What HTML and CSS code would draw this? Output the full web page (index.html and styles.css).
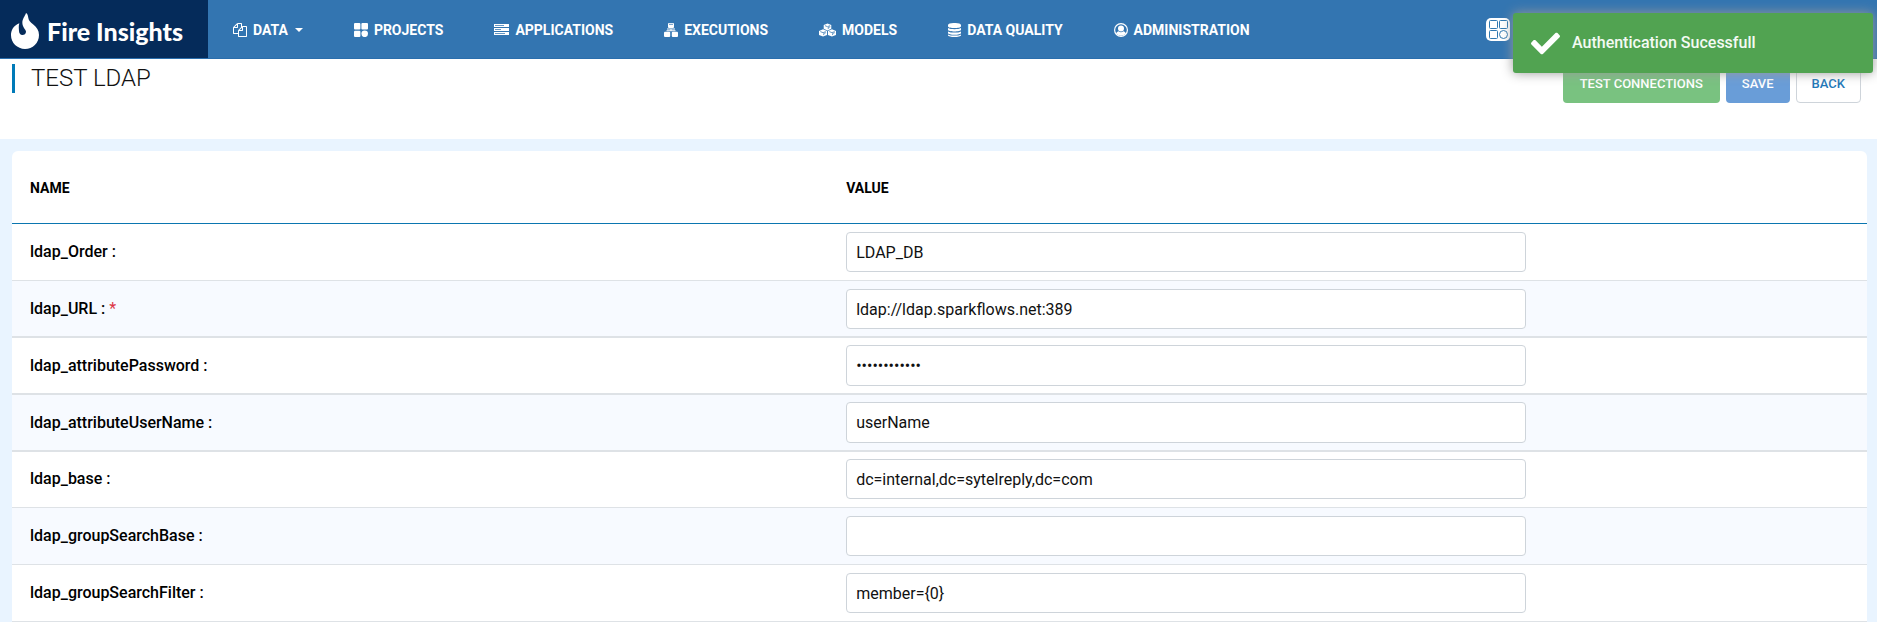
FILE: index.html
```html
<!DOCTYPE html>
<html lang="en">
<head>
<meta charset="utf-8">
<title>Fire Insights - Test LDAP</title>
<link rel="stylesheet" href="styles.css">
</head>
<body>
<header class="topbar">
  <a class="brand" href="#">
    <svg class="brand-logo" viewBox="0 0 84 108" aria-hidden="true"><path fill="#fff" d="M45 0C50 2 51 9 52 15C53 22 58 28 66 34C77 42 84 53 84 66C84 90 65 108 42 108C19 108 0 90 0 67C0 53 7 38 25 31C22 41 24 47 24 54C24 61 28 66 34 66C40 66 45 62 45 56C45 50 34 42 34 29C34 17 42 10 45 0Z"/></svg>
    <span>Fire Insights</span>
  </a>
  <nav class="menu">
    <a class="menu-item" href="#">
      <svg class="icon" viewBox="0 0 1792 1792" aria-hidden="true"><path d="M1696 384q40 0 68 28t28 68v1216q0 40-28 68t-68 28h-960q-40 0-68-28t-28-68v-288h-544q-40 0-68-28t-28-68v-672q0-40 20-88t48-76l408-408q28-28 76-48t88-20h416q40 0 68 28t28 68v328q68-40 128-40h416zm-544 213l-299 299h299v-299zm-640-384l-299 299h299v-299zm196 647l316-316v-416h-384v416q0 40-28 68t-68 28h-416v640h512v-256q0-40 20-88t48-76zm956 804v-1152h-384v416q0 40-28 68t-68 28h-416v640h896z"/></svg>
      <span>DATA</span><span class="caret"></span>
    </a>
    <a class="menu-item" href="#">
      <svg class="icon" viewBox="0 0 14 14" aria-hidden="true"><rect width="6.4" height="6.6" rx="1"/><rect x="7.4" width="6.6" height="6.6" rx="1"/><rect y="7.8" width="6.4" height="6.2" rx="1"/><circle cx="10.7" cy="10.8" r="3.3"/></svg>
      <span>PROJECTS</span>
    </a>
    <a class="menu-item" href="#">
      <svg class="icon icon-wide" viewBox="0 0 15 14" aria-hidden="true"><path fill-rule="evenodd" d="M0 1h15v3H0zM1 2.200v.8h9v-.8zM0 5h15v3H0zM1 6.200v.8h6v-.8zM0 9h15v3H0zM1 10.200v.8h10v-.8z"/></svg>
      <span>APPLICATIONS</span>
    </a>
    <a class="menu-item" href="#">
      <svg class="icon" viewBox="0 0 14 14" aria-hidden="true"><rect x="4" width="6" height="5" rx="1"/><path d="M3 5.600h8v1H3zM6.500 6h1v2h-1zM2.500 7.300h9v.9h-9z"/><rect y="8.800" width="6.200" height="5.200" rx="1"/><rect x="7.800" y="8.800" width="6.200" height="5.200" rx="1"/><path class="line" d="M5 1.300h4"/></svg>
      <span>EXECUTIONS</span>
    </a>
    <a class="menu-item" href="#">
      <svg class="icon icon-cubes" viewBox="0 0 18 14" aria-hidden="true"><path d="M9 0l4 1.600v4.200L9 7.600 5 5.800V1.600zM4.300 6.200l4.200 1.800v4.200L4.300 14 0 12.200V8zM13.700 6.200L18 8v4.200L13.700 14l-4.200-1.800V8z"/><path class="line" d="M6.300 2.400L9 3.500l2.700-1.100M9.800 5.900V4.400l2.200-.9M1.400 8.700l2.900 1.100 2.800-1.100M5 12.400v-1.700l2.300-.9M10.900 8.700l2.800 1.100 2.900-1.100M14.400 12.400v-1.700l2.300-.9"/></svg>
      <span>MODELS</span>
    </a>
    <a class="menu-item" href="#">
      <svg class="icon icon-narrow" viewBox="0 0 13 14" aria-hidden="true"><path d="M0 2c0-2.700 13-2.700 13 0v1.200c0 2.500-13 2.500-13 0zM0 5c2.600 1.600 10.400 1.600 13 0v1.700c0 2.300-13 2.300-13 0zM0 8.400c2.600 1.600 10.400 1.600 13 0v1.500c0 2.400-13 2.400-13 0zM0 11.400c2.600 1.600 10.400 1.600 13 0v.8c0 2.400-13 2.400-13 0z"/></svg>
      <span>DATA QUALITY</span>
    </a>
    <a class="menu-item" href="#">
      <svg class="icon" viewBox="0 0 14 14" aria-hidden="true"><circle cx="7" cy="7" r="7"/><circle cx="7" cy="7" r="5.800" fill="#3375b1"/><circle cx="7" cy="5.600" r="3"/><path d="M2 10.600C2.600 9 3.800 8.400 4.600 8.200C6 9.600 8 9.600 9.400 8.200C10.400 8.400 11.400 9 12 10.600A7 7 0 0 1 2 10.600z"/></svg>
      <span>ADMINISTRATION</span>
    </a>
  </nav>
  <button class="apps" type="button" aria-label="Apps">
    <svg viewBox="0 0 24 24" aria-hidden="true"><rect width="24" height="23" rx="5" fill="#fff"/><g fill="none" stroke="#2f78b0"><rect x="3.500" y="2.500" width="8" height="8" rx="1"/><rect x="13.500" y="2.500" width="8" height="8" rx="1"/><rect x="3.500" y="12.500" width="8" height="8" rx="1"/><circle cx="17.500" cy="16.500" r="4"/></g></svg>
  </button>
</header>

<section class="page-head">
  <h1 class="page-title">TEST LDAP</h1>
  <div class="actions">
    <button class="btn btn-test" type="button">TEST CONNECTIONS</button>
    <button class="btn btn-save" type="button">SAVE</button>
    <button class="btn btn-back" type="button">BACK</button>
  </div>
</section>

<main class="content">
  <table class="settings">
    <thead>
      <tr><th class="col-name" scope="col">NAME</th><th scope="col">VALUE</th></tr>
    </thead>
    <tbody>
      <tr><td><label for="order">ldap_Order :</label></td><td><input class="field" id="order" type="text" value="LDAP_DB"></td></tr>
      <tr class="thick"><td><label for="url">ldap_URL : <span class="required">*</span></label></td><td><input class="field" id="url" type="text" value="ldap://ldap.sparkflows.net:389"></td></tr>
      <tr class="thick"><td><label for="pass">ldap_attributePassword :</label></td><td><input class="field" id="pass" type="password" value="abcdefghijkl"></td></tr>
      <tr class="thick"><td><label for="user">ldap_attributeUserName :</label></td><td><input class="field" id="user" type="text" value="userName"></td></tr>
      <tr class="tight"><td><label for="base">ldap_base :</label></td><td><input class="field" id="base" type="text" value="dc=internal,dc=sytelreply,dc=com"></td></tr>
      <tr><td><label for="gbase">ldap_groupSearchBase :</label></td><td><input class="field" id="gbase" type="text" value=""></td></tr>
      <tr><td><label for="gfilter">ldap_groupSearchFilter :</label></td><td><input class="field" id="gfilter" type="text" value="member={0}"></td></tr>
    </tbody>
  </table>
</main>

<div class="toast" role="status">
  <svg class="toast-icon" viewBox="0 0 512 512" aria-hidden="true"><path fill="#fff" d="M173.898 439.404l-166.400-166.400c-9.997-9.997-9.997-26.206 0-36.204l36.203-36.204c9.997-9.998 26.207-9.998 36.204 0L192 312.690 432.095 72.596c9.997-9.997 26.207-9.997 36.204 0l36.203 36.204c9.997 9.997 9.997 26.206 0 36.204l-294.400 294.401c-9.998 9.997-26.207 9.997-36.204-.001z"/></svg>
  <span>Authentication Sucessfull</span>
</div>
</body>
</html>
```

FILE: styles.css
```css
* { box-sizing: border-box; }

body {
  margin: 0;
  background: #e9f4ff;
  color: #000;
  font-family: Roboto, "Liberation Sans", sans-serif;
  font-size: 16px;
}

.topbar {
  display: flex;
  align-items: stretch;
  height: 59px;
  background: #3375b1;
  border-bottom: 1px solid #2a6ead;
}

.brand {
  display: flex;
  align-items: center;
  gap: 8px;
  width: 208px;
  padding: 4px 0 0 11px;
  background: #052b5a;
  color: #fff;
  font: 900 25px/32px Lato, sans-serif;
  text-decoration: none;
  white-space: nowrap;
}

.brand-logo { width: 28px; height: 36px; }

.menu {
  display: flex;
  align-items: center;
  gap: 51px;
  padding: 2px 0 0 25px;
}

.menu-item {
  display: flex;
  align-items: center;
  gap: 6px;
  color: #fff;
  font-size: 14px;
  font-weight: 700;
  line-height: 20px;
  text-decoration: none;
  white-space: nowrap;
}

.icon { width: 14px; height: 14px; fill: #fff; }
.icon-wide { width: 15px; }
.icon-cubes { width: 17px; }
.icon-narrow { width: 13px; }
.icon .line { fill: none; stroke: #3375b1; stroke-width: 0.8; }

.caret {
  margin-left: 1px;
  border: 4px solid transparent;
  border-top-color: #fff;
  border-bottom: 0;
}

.apps {
  margin: 2px 367px 0 auto;
  align-self: center;
  padding: 0;
  border: 0;
  background: none;
  cursor: pointer;
}

.apps svg { display: block; width: 24px; height: 24px; }

.page-head {
  display: flex;
  align-items: flex-start;
  justify-content: space-between;
  min-height: 80px;
  padding: 5px 16px 0 12px;
  background: #fff;
}

.page-title {
  margin: 0;
  padding-left: 16px;
  border-left: 3px solid #007ab8;
  color: #111;
  font-size: 24px;
  font-weight: 300;
  line-height: 29px;
}

.actions { display: flex; gap: 6px; }

.btn {
  height: 39px;
  padding: 0 16px;
  border: 0;
  border-radius: 4px;
  color: #fff;
  font: 500 13px/20px Roboto, sans-serif;
  cursor: pointer;
}

.btn-test { padding: 0 17px; background: #79c280; }
.btn-save { background: #699dd8; }
.btn-back { padding: 0 15px; background: #fff; border: 1px solid #ced4da; color: #1f78b8; }

.content { padding: 12px 10px 0 12px; }

.settings {
  width: 100%;
  table-layout: fixed;
  border-collapse: separate;
  border-spacing: 0;
  background: #fff;
  border-radius: 6px 6px 0 0;
}

.col-name { width: 44%; }

.settings th {
  height: 73px;
  padding: 2px 0 0 18px;
  border-bottom: 1px solid #0b76b0;
  font-size: 14px;
  font-weight: 700;
  line-height: 20px;
  text-align: left;
}

.settings td {
  padding: 8px 0 8px 18px;
  border-bottom: 1px solid #dee2e6;
}

.settings tbody tr:nth-child(even) { background: #f7faff; }
.settings .thick td { padding-bottom: 7px; border-bottom-width: 2px; }
.settings .thick + .thick td { padding-top: 7px; }
.settings .thick + .thick .field { height: 41px; }
.settings .tight td { padding-top: 7px; }

.settings label { font-weight: 500; line-height: 24px; }

.required { color: #dc3545; font-weight: 400; }

.field {
  display: block;
  width: 100%;
  max-width: 680px;
  height: 40px;
  padding: 0 9px;
  border: 1px solid #ced4da;
  border-radius: 4px;
  background: #fff;
  color: #111;
  font: 400 16px/24px Roboto, sans-serif;
}

.toast {
  position: absolute;
  top: 13px;
  right: 4px;
  display: flex;
  align-items: center;
  gap: 12px;
  width: 360px;
  height: 60px;
  padding: 0 18px;
  border-radius: 3px;
  background: #51a351;
  box-shadow: 0 0 12px #999;
  color: #f3faf3;
  font-weight: 500;
}

.toast span { padding-bottom: 2px; }

.toast-icon { width: 29px; height: 29px; }
```
